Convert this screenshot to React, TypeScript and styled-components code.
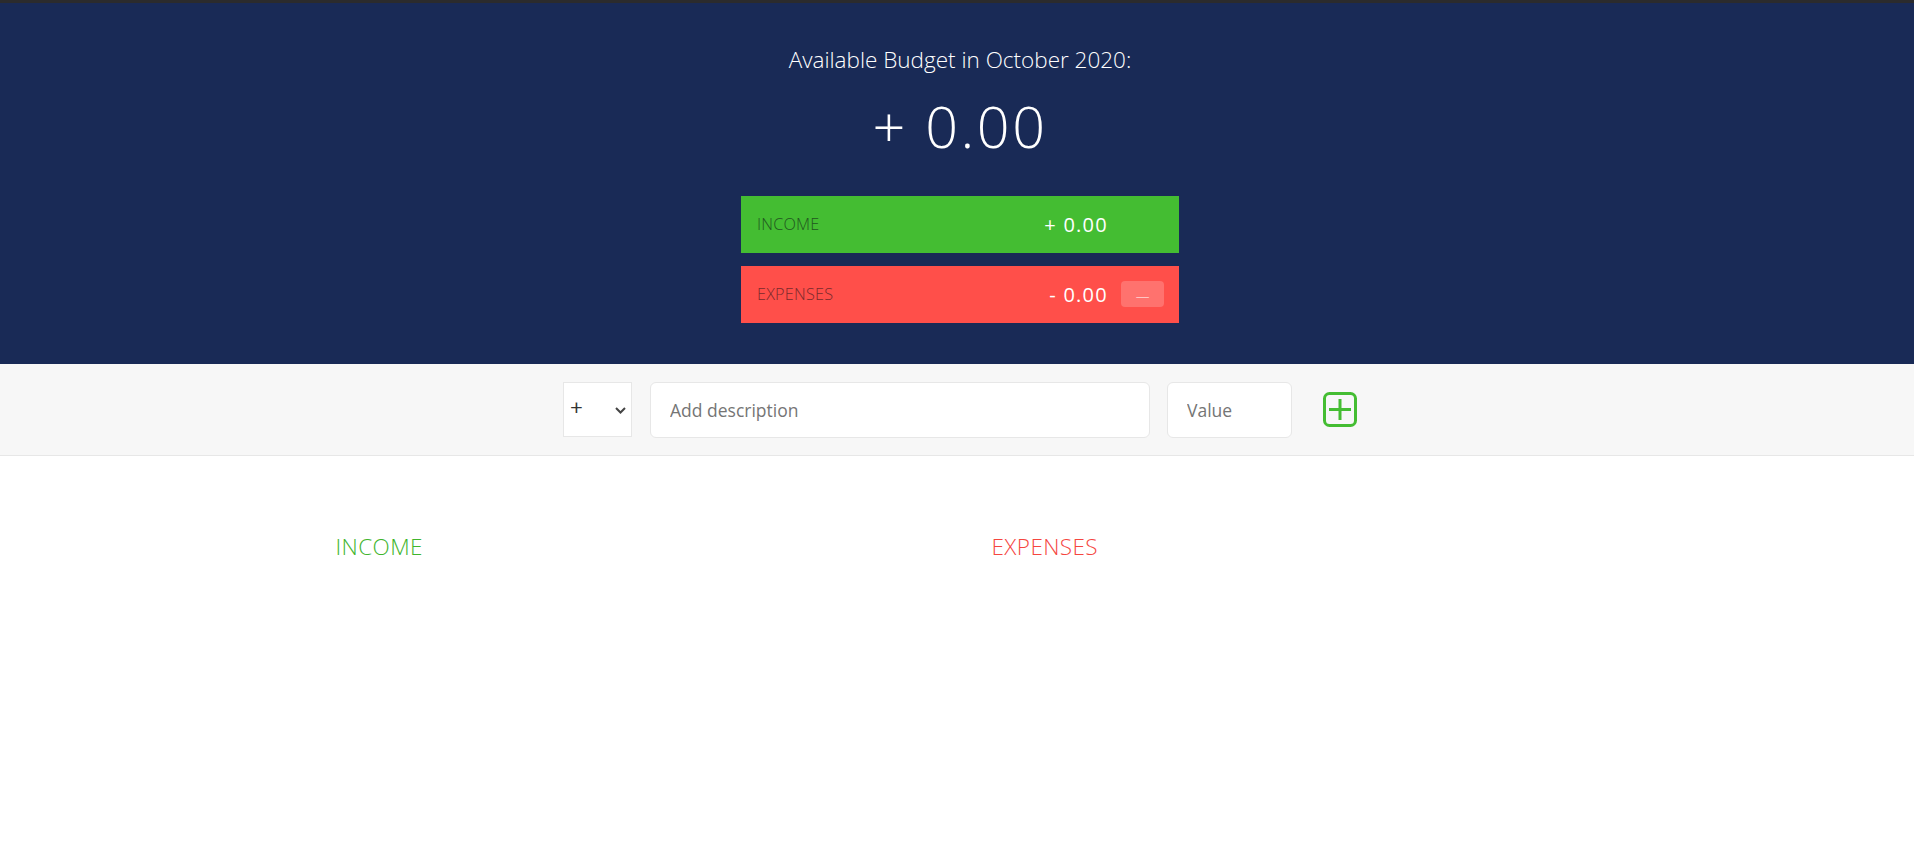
import styled, { createGlobalStyle } from "styled-components";

const GlobalStyle = createGlobalStyle`
  * {
    box-sizing: border-box;
  }

  html,
  body {
    margin: 0;
    padding: 0;
    background: #fff;
  }

  body {
    font-family: "Open Sans", "Liberation Sans", sans-serif;
    color: #555;
  }
`;

type SummaryProps = {
  label: string;
  value: string;
  percentage?: string;
  $color: string;
  $labelColor: string;
};

function SummaryBar({ label, value, percentage, $color, $labelColor }: SummaryProps) {
  return (
    <Bar $color={$color}>
      <BarLabel $color={$labelColor}>{label}</BarLabel>
      <BarRight>
        <BarValue>{value}</BarValue>
        <Percentage $filled={!!percentage}>{percentage}</Percentage>
      </BarRight>
    </Bar>
  );
}

function AddIcon() {
  return (
    <svg width="34" height="35" viewBox="0 0 34 35" fill="none">
      <rect x="1.5" y="1.5" width="31" height="32" rx="5" stroke="#44bd32" strokeWidth="3" />
      <path d="M6 17.5H28M17 7V28" stroke="#44bd32" strokeWidth="3" />
    </svg>
  );
}

function Chevron() {
  return (
    <ChevronMark width="11" height="7" viewBox="0 0 11 7" fill="none">
      <path d="M1 1L5.5 5.5L10 1" stroke="#444" strokeWidth="2" />
    </ChevronMark>
  );
}

export default function App() {
  return (
    <>
      <GlobalStyle />
      <Strip />
      <Top>
        <Budget>
          <BudgetTitle>Available Budget in October 2020:</BudgetTitle>
          <BudgetValue>+ 0.00</BudgetValue>
          <SummaryBar label="Income" value="+ 0.00" $color="#44bd32" $labelColor="#22551f" />
          <SummaryBar
            label="Expenses"
            value="- 0.00"
            percentage="—"
            $color="#ff4f4a"
            $labelColor="#7a2a2c"
          />
        </Budget>
      </Top>
      <AddBar>
        <SelectWrap>
          <TypeSelect defaultValue="inc">
            <option value="inc">+</option>
            <option value="exp">-</option>
          </TypeSelect>
          <Chevron />
        </SelectWrap>
        <Field $width={500} type="text" placeholder="Add description" />
        <Field $width={125} type="number" placeholder="Value" />
        <AddButton type="button">
          <AddIcon />
        </AddButton>
      </AddBar>
      <Lists>
        <ListTitle $color="#3fb52e">Income</ListTitle>
        <ListTitle $color="#f5463f">Expenses</ListTitle>
      </Lists>
    </>
  );
}

const Strip = styled.div`
  height: 3px;
  background: #2b2b2d;
`;

const Top = styled.header`
  height: 361px;
  padding-left: 6px;
  background: #192a56;
  display: flex;
  justify-content: center;
  align-items: center;
`;

const Budget = styled.div`
  width: 438px;
  color: #fff;
`;

const BudgetTitle = styled.div`
  font-size: 22.5px;
  font-weight: 340;
  text-align: center;
  margin-bottom: 12.5px;
`;

const BudgetValue = styled.div`
  font-size: 57.5px;
  font-weight: 330;
  letter-spacing: 2.5px;
  text-align: center;
  margin-bottom: 31px;
`;

const Bar = styled.div<{ $color: string }>`
  height: 57px;
  padding: 0 15px 1px;
  background: ${(p) => p.$color};
  display: flex;
  justify-content: space-between;
  align-items: center;
  text-transform: uppercase;

  & + & {
    margin-top: 13px;
  }
`;

const BarLabel = styled.div<{ $color: string }>`
  margin-left: 1px;
  font-size: 16.25px;
  font-weight: 340;
  letter-spacing: 0.2px;
  color: ${(p) => p.$color};
`;

const BarRight = styled.div`
  display: flex;
  align-items: center;
`;

const BarValue = styled.div`
  font-size: 20px;
  letter-spacing: 1.25px;
`;

const Percentage = styled.div<{ $filled: boolean }>`
  width: 43px;
  height: 26px;
  margin-left: 13px;
  border-radius: 4px;
  font-size: 13.75px;
  font-weight: 300;
  line-height: 29px;
  text-align: center;
  background: ${(p) => (p.$filled ? "rgba(255, 255, 255, 0.2)" : "transparent")};
`;

const AddBar = styled.section`
  height: 92px;
  padding-left: 563px;
  background: #f7f7f7;
  border-bottom: 1px solid #e7e7e7;
  display: flex;
  align-items: center;
  gap: 17px;
`;

const SelectWrap = styled.div`
  position: relative;
  width: 68.5px;
  height: 55px;
  margin-right: 1.5px;
`;

const TypeSelect = styled.select`
  width: 100%;
  height: 100%;
  padding: 0 0 6px 6px;
  background: #fff;
  border: 1px solid #e7e7e7;
  border-radius: 0;
  appearance: none;
  font-family: inherit;
  font-size: 22.5px;
  font-weight: 400;
  color: #333;
`;

const ChevronMark = styled.svg`
  position: absolute;
  top: 25px;
  right: 6px;
  pointer-events: none;
`;

const Field = styled.input<{ $width: number }>`
  width: ${(p) => p.$width}px;
  height: 56px;
  padding: 0 19px;
  background: #fff;
  border: 1px solid #e7e7e7;
  border-radius: 6px;
  font-family: inherit;
  font-size: 17.5px;
  color: inherit;
  appearance: textfield;

  &::placeholder {
    color: #757575;
  }
`;

const AddButton = styled.button`
  margin-left: 14px;
  padding: 0;
  background: none;
  border: none;
  display: flex;
  cursor: pointer;
`;

const Lists = styled.main`
  width: 1250px;
  margin: 75px 0 0 335.5px;
  display: grid;
  grid-template-columns: 594px 594px;
  justify-content: space-between;
`;

const ListTitle = styled.h2<{ $color: string }>`
  margin: 0;
  font-size: 22.5px;
  font-weight: 340;
  letter-spacing: 0.4px;
  text-transform: uppercase;
  color: ${(p) => p.$color};
`;
